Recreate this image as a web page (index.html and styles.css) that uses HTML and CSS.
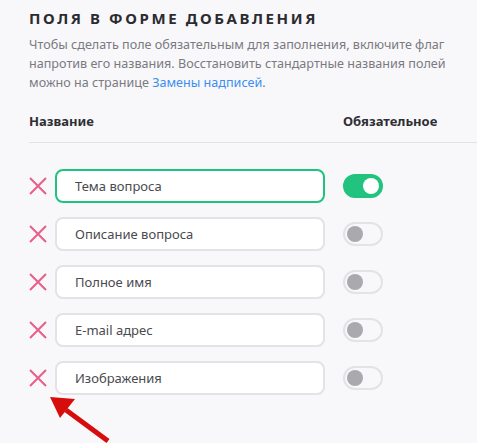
FILE: index.html
```html
<!DOCTYPE html>
<html lang="ru">
<head>
<meta charset="utf-8">
<link rel="stylesheet" href="styles.css">
</head>
<body>
<div class="page">
  <h2 class="title">ПОЛЯ В ФОРМЕ ДОБАВЛЕНИЯ</h2>
  <p class="desc">Чтобы сделать поле обязательным для заполнения, включите флаг напротив его названия. Восстановить стандартные названия полей можно на странице <a href="#">Замены надписей</a>.</p>
  <div class="head">
    <span class="col-name">Название</span>
    <span class="col-req">Обязательное</span>
  </div>
  <div class="rows">
    <div class="row">
      <span class="del"><svg width="18" height="18" viewBox="0 0 18 18"><path d="M1 1L17 17M17 1L1 17" stroke="#ec5c88" stroke-width="2" fill="none"/></svg></span>
      <div class="field active">Тема вопроса</div>
      <span class="toggle on"><span class="knob"></span></span>
    </div>
    <div class="row">
      <span class="del"><svg width="18" height="18" viewBox="0 0 18 18"><path d="M1 1L17 17M17 1L1 17" stroke="#ec5c88" stroke-width="2" fill="none"/></svg></span>
      <div class="field">Описание вопроса</div>
      <span class="toggle"><span class="knob"></span></span>
    </div>
    <div class="row">
      <span class="del"><svg width="18" height="18" viewBox="0 0 18 18"><path d="M1 1L17 17M17 1L1 17" stroke="#ec5c88" stroke-width="2" fill="none"/></svg></span>
      <div class="field">Полное имя</div>
      <span class="toggle"><span class="knob"></span></span>
    </div>
    <div class="row">
      <span class="del"><svg width="18" height="18" viewBox="0 0 18 18"><path d="M1 1L17 17M17 1L1 17" stroke="#ec5c88" stroke-width="2" fill="none"/></svg></span>
      <div class="field">E-mail адрес</div>
      <span class="toggle"><span class="knob"></span></span>
    </div>
    <div class="row">
      <span class="del"><svg width="18" height="18" viewBox="0 0 18 18"><path d="M1 1L17 17M17 1L1 17" stroke="#ec5c88" stroke-width="2" fill="none"/></svg></span>
      <div class="field">Изображения</div>
      <span class="toggle"><span class="knob"></span></span>
    </div>
  </div>
  <svg class="arrow" width="70" height="50" viewBox="0 0 70 50">
    <path d="M60 47L18 16" stroke="#d50d0d" stroke-width="5" stroke-linecap="butt" fill="none"/>
    <polygon points="2,3 27,5 12,24" fill="#d50d0d"/>
  </svg>
</div>
</body>
</html>
```

FILE: styles.css
```css
html, body {
  margin: 0;
  padding: 0;
  background: #f8f8fb;
}
.page {
  position: relative;
  height: 443px;
  overflow: hidden;
  padding: 9px 0 0 29px;
  box-sizing: border-box;
  font-family: "Noto Sans", "Open Sans", sans-serif;
}
.title {
  margin: 0;
  font-size: 15px;
  line-height: 18px;
  font-weight: 700;
  letter-spacing: 2.6px;
  color: #2b2b30;
}
.desc {
  margin: 8px 0 0;
  width: 430px;
  font-size: 12.6px;
  line-height: 19px;
  color: #7a7a80;
}
.desc a {
  color: #3d8ef0;
  text-decoration: none;
}
.head {
  display: flex;
  margin-top: 20px;
  padding-bottom: 12px;
  border-bottom: 1px solid #e1e1e6;
  font-size: 13px;
  line-height: 18px;
  font-weight: 700;
  color: #2e2e33;
}
.col-name {
  width: 314px;
}
.rows {
  display: flex;
  flex-direction: column;
  gap: 14px;
  margin-top: 26px;
}
.row {
  display: flex;
  align-items: center;
  height: 34px;
}
.del {
  display: flex;
  width: 26px;
}
.field {
  box-sizing: border-box;
  width: 270px;
  height: 34px;
  border: 2px solid #e3e3e7;
  border-radius: 8px;
  background: #fff;
  padding-left: 18px;
  font-size: 13px;
  line-height: 30px;
  color: #4a4a4f;
}
.field.active {
  border-color: #1fc37f;
}
.toggle {
  box-sizing: border-box;
  margin-left: 18px;
  width: 40px;
  height: 24px;
  border-radius: 12px;
  border: 2px solid #e3e3e6;
  display: flex;
  align-items: center;
  padding: 0 2px;
  background: #f8f8fb;
}
.toggle .knob {
  width: 16px;
  height: 16px;
  border-radius: 50%;
  background: #a9a9ae;
}
.toggle.on {
  background: #22c37f;
  border-color: #22c37f;
  justify-content: flex-end;
}
.toggle.on .knob {
  background: #fff;
}
.arrow {
  position: absolute;
  left: 48px;
  top: 394px;
}
```
